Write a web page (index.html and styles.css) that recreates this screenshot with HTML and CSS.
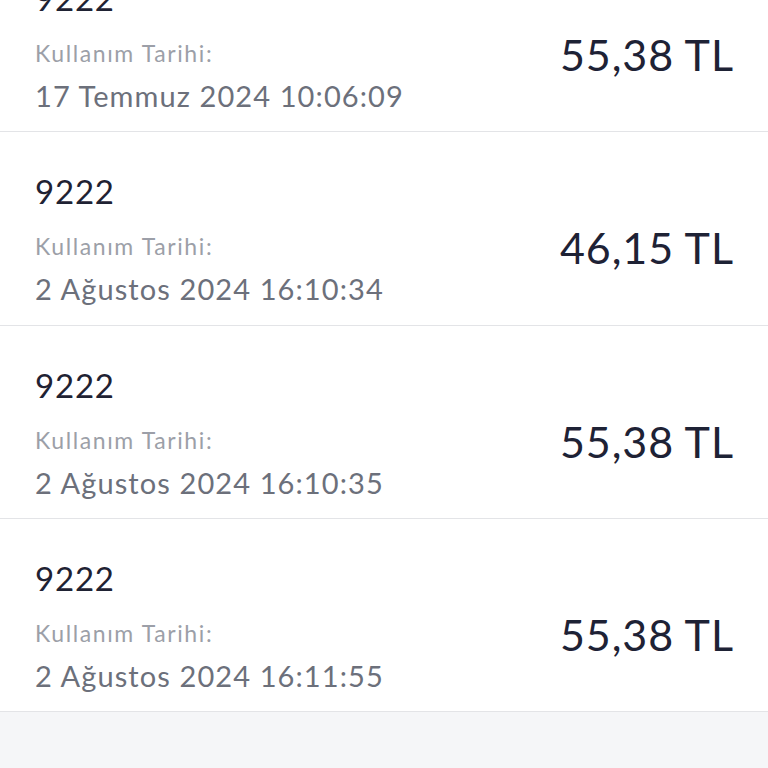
FILE: index.html
```html
<!DOCTYPE html>
<html lang="tr">
<head>
<meta charset="utf-8">
<link rel="stylesheet" href="styles.css">
</head>
<body>
<div class="list">
  <div class="item">
    <div class="info">
      <div class="code">9222</div>
      <div class="label">Kullanım Tarihi:</div>
      <div class="date">17 Temmuz 2024 10:06:09</div>
    </div>
    <div class="amount">55,38 TL</div>
  </div>
  <div class="item">
    <div class="info">
      <div class="code">9222</div>
      <div class="label">Kullanım Tarihi:</div>
      <div class="date">2 Ağustos 2024 16:10:34</div>
    </div>
    <div class="amount">46,15 TL</div>
  </div>
  <div class="item">
    <div class="info">
      <div class="code">9222</div>
      <div class="label">Kullanım Tarihi:</div>
      <div class="date">2 Ağustos 2024 16:10:35</div>
    </div>
    <div class="amount">55,38 TL</div>
  </div>
  <div class="item">
    <div class="info">
      <div class="code">9222</div>
      <div class="label">Kullanım Tarihi:</div>
      <div class="date">2 Ağustos 2024 16:11:55</div>
    </div>
    <div class="amount">55,38 TL</div>
  </div>
</div>
</body>
</html>
```
FILE: styles.css
```css
html, body {
  margin: 0;
  padding: 0;
  background: #f5f6f8;
  font-family: Lato, "Noto Sans", sans-serif;
}
.list {
  margin-top: -61px;
  background: #ffffff;
}
.item {
  box-sizing: border-box;
  height: 193.33px;
  border-bottom: 1px solid #e3e4e7;
  padding: 0 35px;
  display: flex;
  justify-content: space-between;
  align-items: flex-start;
}
.info {
  padding-top: 39px;
}
.code {
  font-size: 33px;
  line-height: 40px;
  letter-spacing: 0.8px;
  color: #1f2233;
}
.label {
  margin-top: 20px;
  font-size: 23px;
  line-height: 30px;
  letter-spacing: 1.6px;
  color: #9c9fa8;
}
.date {
  margin-top: 10px;
  font-size: 29px;
  line-height: 36px;
  letter-spacing: 1.1px;
  color: #6c707b;
}
.amount {
  margin-top: 91px;
  margin-right: -0.9px;
  font-size: 43px;
  line-height: 50px;
  letter-spacing: 0.9px;
  color: #1e2235;
}
```
